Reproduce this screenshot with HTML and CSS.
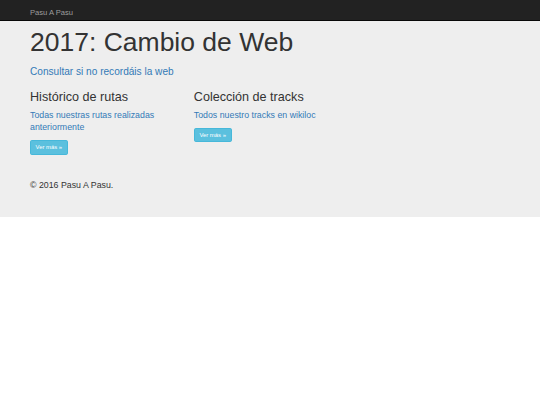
FILE: index.html
```html
<!DOCTYPE html>
<html lang="es">
<head>
<meta charset="utf-8">
<title>Pasu A Pasu</title>
<link rel="stylesheet" href="styles.css">
</head>
<body>
<nav class="navbar">
  <div class="container">
    <a class="brand" href="#">Pasu A Pasu</a>
  </div>
</nav>
<div class="jumbotron">
  <div class="container">
    <h1 class="title">2017: Cambio de Web</h1>
    <p class="lead"><a href="#">Consultar si no recordáis la web</a></p>
    <div class="row">
      <div class="col">
        <h2 class="col-title">Histórico de rutas</h2>
        <p class="col-text"><a href="#">Todas nuestras rutas realizadas anteriormente</a></p>
        <p class="col-btn"><a class="btn" href="#">Ver más »</a></p>
      </div>
      <div class="col">
        <h2 class="col-title">Colección de tracks</h2>
        <p class="col-text"><a href="#">Todos nuestro tracks en wikiloc</a></p>
        <p class="col-btn"><a class="btn" href="#">Ver más »</a></p>
      </div>
      <div class="col"></div>
    </div>
    <hr class="sep">
    <footer class="footer">
      <p class="footer-text">© 2016 Pasu A Pasu.</p>
    </footer>
  </div>
</div>
</body>
</html>
```

FILE: styles.css
```css
html, body {
  margin: 0;
  padding: 0;
  background: #fff;
  font-family: "Liberation Sans", Arial, sans-serif;
  color: #333;
}
a { text-decoration: none; }

.container {
  width: 479px;
  margin-left: 30px;
}

.navbar {
  height: 20px;
  background: #222;
  border-bottom: 1px solid #080808;
  display: flex;
  align-items: center;
}
.brand {
  color: #9d9d9d;
  font-size: 7.6px;
  line-height: 10px;
}

.jumbotron {
  background: #eee;
  padding-top: 7px;
  padding-bottom: 19px;
}

.title {
  margin: 0 0 7.5px 0;
  font-size: 26.5px;
  line-height: 29px;
  font-weight: 500;
  color: #333;
}

.lead {
  margin: 0 0 12px 0;
  font-size: 10.1px;
  line-height: 14.1px;
}
.lead a, .col-text a { color: #337ab7; }

.row {
  display: grid;
  grid-template-columns: repeat(3, 163.8px);
}
.col { padding-right: 12.6px; }

.col-title {
  margin: 0 0 4.3px 0;
  font-size: 12.6px;
  line-height: 13.9px;
  font-weight: 500;
  color: #333;
}
.col-text {
  margin: 0 0 6.3px 0;
  font-size: 8.8px;
  line-height: 12.6px;
}
.col-btn {
  margin: 0 0 6.3px 0;
  font-size: 8.8px;
  line-height: 14.3px;
  display: flex;
}
.btn {
  display: inline-block;
  box-sizing: border-box;
  height: 14.3px;
  padding: 0 4.6px;
  font-size: 5.9px;
  line-height: 12.3px;
  color: #fff;
  background: #5bc0de;
  border: 1px solid #46b8da;
  border-radius: 1.7px;
}

.sep {
  margin: 8.4px 0;
  border: 0;
  border-top: 1px solid #eee;
  height: 0;
}

.footer-text {
  margin: 0 0 6.3px 0;
  font-size: 8.8px;
  line-height: 12.6px;
  color: #333;
}
```
